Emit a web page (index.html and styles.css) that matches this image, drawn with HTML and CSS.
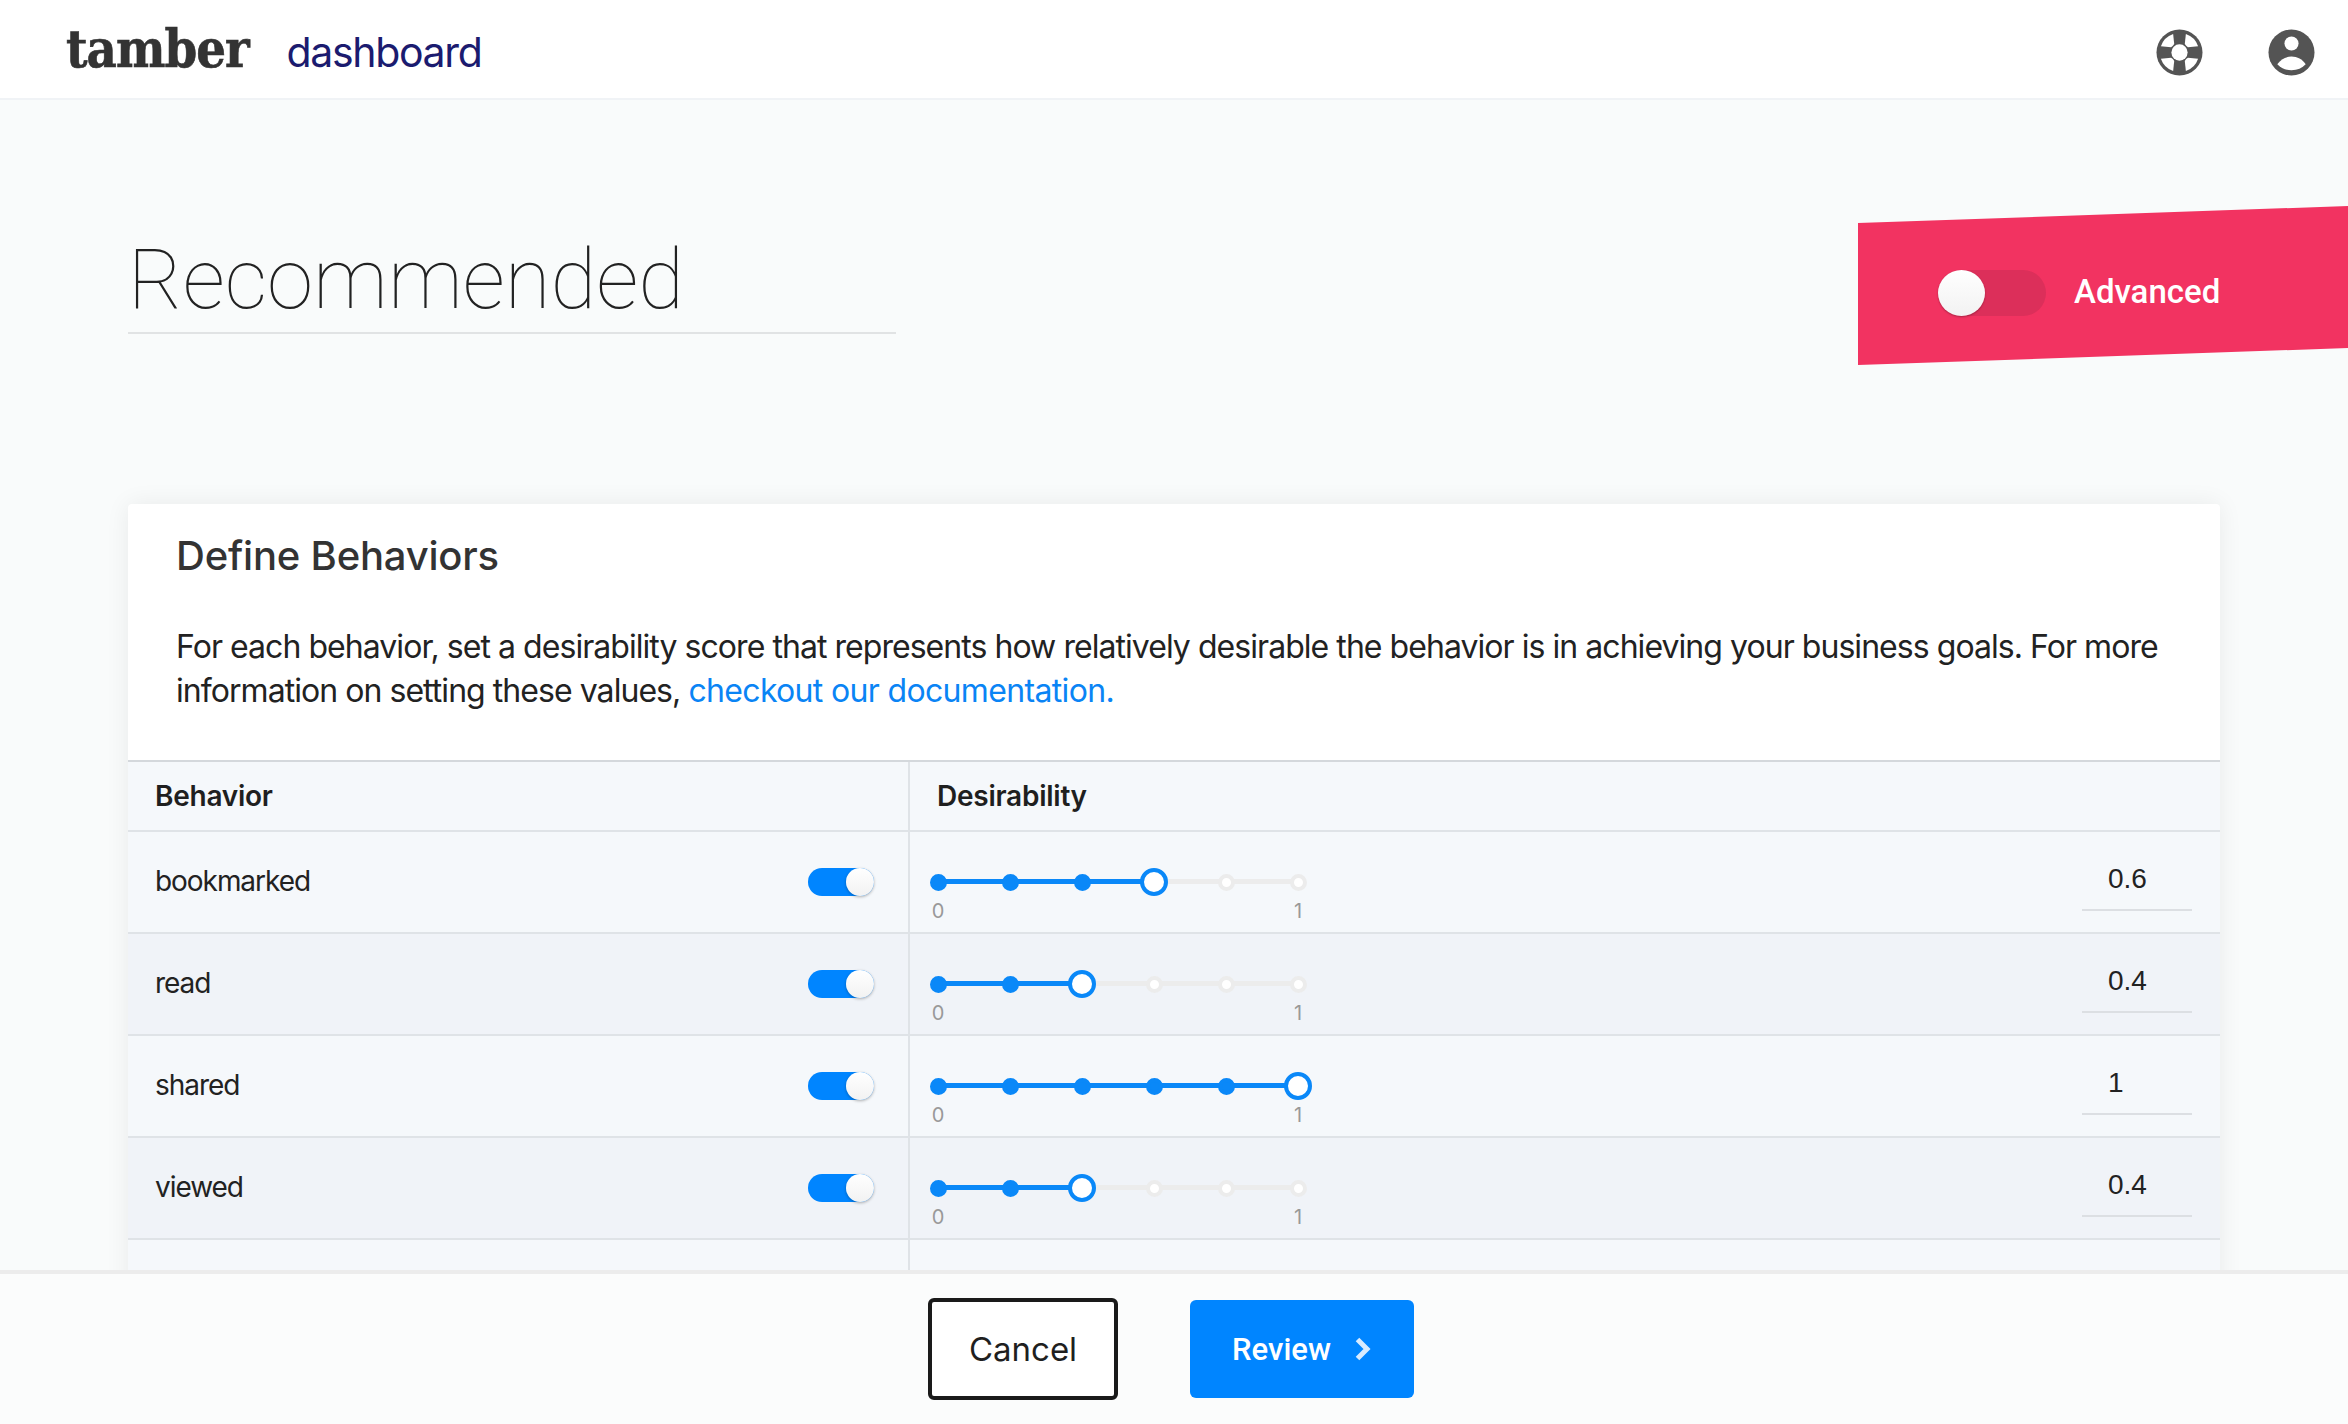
FILE: index.html
```html
<!DOCTYPE html>
<html lang="en">
<head>
<meta charset="utf-8">
<title>tamber dashboard</title>
<link rel="stylesheet" href="styles.css">
</head>
<body>
<header class="topbar">
  <div class="brand">
    <span class="logo">tamber</span>
    <span class="product">dashboard</span>
  </div>
  <div class="top-icons">
    <svg class="top-icon" viewBox="0 0 48 48" aria-label="Help">
      <circle cx="24" cy="24" r="23.5" fill="#545454"/>
      <g fill="#fff">
        <path d="M30.5 5A20 20 0 0 1 43 17.5L32.6 18.6Q30.5 17.5 29.4 15.4Z"/>
        <path d="M43 30.5A20 20 0 0 1 30.5 43L29.4 32.6Q30.5 30.5 32.6 29.4Z"/>
        <path d="M17.5 43A20 20 0 0 1 5 30.5L15.4 29.4Q17.5 30.5 18.6 32.6Z"/>
        <path d="M5 17.5A20 20 0 0 1 17.5 5L18.6 15.4Q17.5 17.5 15.4 18.6Z"/>
        <circle cx="24" cy="24" r="8.3"/>
      </g>
    </svg>
    <svg class="top-icon" viewBox="0 0 48 48" aria-label="Account">
      <circle cx="24" cy="24" r="23.5" fill="#545454"/>
      <circle cx="24" cy="14.8" r="7.2" fill="#fff"/>
      <path d="M9.5 36C13 31 18 28.2 24 28.2S35 31 38.5 36C35 40 30 42 24 42S13 40 9.5 36Z" fill="#fff"/>
    </svg>
  </div>
</header>

<main class="content">
  <div class="ribbon">
    <span class="switch-off"><span class="knob-large"></span></span>
    <span class="ribbon-label">Advanced</span>
  </div>

  <div class="title-block"><h1 class="page-title">Recommended</h1></div>

  <section class="card">
    <div class="card-head">
      <h2 class="card-title">Define Behaviors</h2>
      <p class="card-text">For each behavior, set a desirability score that represents how relatively desirable the behavior is in achieving your business goals. For more information on setting these values, <a class="doc-link" href="#">checkout our documentation.</a></p>
    </div>

    <div class="row row-head">
      <div class="cell-name"><span class="head-text">Behavior</span></div>
      <div class="cell-score"><span class="head-text head-shift">Desirability</span></div>
    </div>

    <div class="row">
      <div class="cell-name"><span class="name">bookmarked</span><span class="switch-on"><span class="knob"></span></span></div>
      <div class="cell-score">
        <div class="slider">
          <div class="track"><div class="fill" style="width:60%"></div></div>
          <div class="stops"><span class="stop"><i class="dot on"></i></span><span class="stop"><i class="dot on"></i></span><span class="stop"><i class="dot on"></i></span><span class="stop"><i class="handle"></i></span><span class="stop"><i class="dot"></i></span><span class="stop"><i class="dot"></i></span></div>
          <div class="marks"><span class="stop mark">0</span><span class="stop mark">1</span></div>
        </div>
        <div class="value">0.6</div>
      </div>
    </div>

    <div class="row row-alt">
      <div class="cell-name"><span class="name">read</span><span class="switch-on"><span class="knob"></span></span></div>
      <div class="cell-score">
        <div class="slider">
          <div class="track"><div class="fill" style="width:40%"></div></div>
          <div class="stops"><span class="stop"><i class="dot on"></i></span><span class="stop"><i class="dot on"></i></span><span class="stop"><i class="handle"></i></span><span class="stop"><i class="dot"></i></span><span class="stop"><i class="dot"></i></span><span class="stop"><i class="dot"></i></span></div>
          <div class="marks"><span class="stop mark">0</span><span class="stop mark">1</span></div>
        </div>
        <div class="value">0.4</div>
      </div>
    </div>

    <div class="row">
      <div class="cell-name"><span class="name">shared</span><span class="switch-on"><span class="knob"></span></span></div>
      <div class="cell-score">
        <div class="slider">
          <div class="track"><div class="fill" style="width:100%"></div></div>
          <div class="stops"><span class="stop"><i class="dot on"></i></span><span class="stop"><i class="dot on"></i></span><span class="stop"><i class="dot on"></i></span><span class="stop"><i class="dot on"></i></span><span class="stop"><i class="dot on"></i></span><span class="stop"><i class="handle"></i></span></div>
          <div class="marks"><span class="stop mark">0</span><span class="stop mark">1</span></div>
        </div>
        <div class="value">1</div>
      </div>
    </div>

    <div class="row row-alt">
      <div class="cell-name"><span class="name">viewed</span><span class="switch-on"><span class="knob"></span></span></div>
      <div class="cell-score">
        <div class="slider">
          <div class="track"><div class="fill" style="width:40%"></div></div>
          <div class="stops"><span class="stop"><i class="dot on"></i></span><span class="stop"><i class="dot on"></i></span><span class="stop"><i class="handle"></i></span><span class="stop"><i class="dot"></i></span><span class="stop"><i class="dot"></i></span><span class="stop"><i class="dot"></i></span></div>
          <div class="marks"><span class="stop mark">0</span><span class="stop mark">1</span></div>
        </div>
        <div class="value">0.4</div>
      </div>
    </div>

    <div class="row">
      <div class="cell-name"></div>
      <div class="cell-score"></div>
    </div>
  </section>
</main>

<footer class="actions">
  <button class="btn-cancel" type="button">Cancel</button>
  <button class="btn-review" type="button">Review
    <svg class="chevron" viewBox="0 0 18 26"><path d="M3.5 3.5 13 13 3.5 22.5" fill="none" stroke="#d8ebff" stroke-width="5"/></svg>
  </button>
</footer>
</body>
</html>
```

FILE: styles.css
```css
* { box-sizing: border-box; }
html, body { margin: 0; height: 100%; }
body {
  height: 1424px;
  display: flex;
  flex-direction: column;
  overflow: hidden;
  background: #f9fbfb;
  font-family: Inter, "Liberation Sans", sans-serif;
  color: #222;
}

.topbar {
  flex: none;
  height: 100px;
  background: #fff;
  border-bottom: 2px solid #f0f3f6;
  display: flex;
  align-items: center;
  justify-content: space-between;
  padding: 0 33px 0 66px;
}
.brand { display: flex; align-items: baseline; gap: 38px; }
.logo {
  font-family: "DejaVu Serif Condensed", "DejaVu Serif", serif;
  font-weight: 700;
  font-size: 52px;
  line-height: 60px;
  color: #333;
  letter-spacing: -1px;
  -webkit-text-stroke: 0.6px #333;
}
.product {
  font-size: 41px;
  letter-spacing: -1.35px;
  color: #1b1b6f;
}
.top-icons { display: flex; gap: 65px; margin-top: 6px; }
.top-icon { width: 47px; height: 47px; display: block; }

.content {
  flex: 1;
  min-height: 0;
  overflow: hidden;
  position: relative;
  padding: 0 128px;
}
.title-block {
  width: 768px;
  height: 234px;
  border-bottom: 2px solid #e1e3e4;
  display: flex;
  align-items: flex-end;
}
.page-title {
  margin: 0 0 4px;
  font-family: Roboto, sans-serif;
  font-weight: 100;
  font-size: 83.5px;
  line-height: 96px;
  color: #222;
}
.ribbon {
  position: absolute;
  left: 1858px;
  top: 106px;
  width: 490px;
  height: 159px;
  background: #f23361;
  clip-path: polygon(0 17px, 100% 0, 100% 142px, 0 100%);
  display: flex;
  align-items: center;
  padding: 12px 0 0 80px;
  gap: 28px;
}
.switch-off {
  width: 108px;
  height: 46px;
  border-radius: 23px;
  background: #dc2f5a;
  display: flex;
  margin-top: 2px;
}
.knob-large {
  width: 47px;
  height: 46px;
  border-radius: 50%;
  background: linear-gradient(#fff, #f2f2f2);
  box-shadow: 0 1px 2px rgba(0,0,0,.3);
}
.ribbon-label {
  color: #fff;
  font-family: Roboto, sans-serif;
  font-weight: 500;
  font-size: 33px;
}

.card {
  margin-top: 170px;
  background: #fff;
  border-radius: 4px 4px 0 0;
  box-shadow: 0 0 24px rgba(0,0,0,.07);
}
.card-head { height: 258px; padding: 26px 40px 0 48px; border-bottom: 2px solid #d4d8dc; }
.card-title {
  margin: 0;
  font-size: 40px;
  line-height: 52px;
  font-weight: 500;
  color: #333;
  letter-spacing: -0.2px;
}
.card-text {
  margin: 43px 0 0;
  font-size: 32px;
  line-height: 44px;
  color: #222;
  letter-spacing: -0.95px;
}
.doc-link { color: #0a84f5; text-decoration: none; letter-spacing: -0.66px; }

.row {
  display: grid;
  grid-template-columns: 782px 1fr;
  height: 102px;
  background: #f5f8fb;
  border-bottom: 2px solid #dfe3e7;
}
.row-head { height: 70px; }
.row-alt { background: #f0f3f8; }
.cell-name {
  border-right: 2px solid #dfe3e7;
  display: flex;
  align-items: center;
  justify-content: space-between;
  padding: 0 34px 0 27px;
}
.cell-score {
  display: flex;
  justify-content: space-between;
  align-items: flex-start;
  padding: 0 28px;
}
.row-head .cell-score { align-items: center; }
.head-text { font-size: 28px; font-weight: 600; color: #1f1f1f; letter-spacing: -0.25px; }
.head-shift { margin-left: -1px; }
.name { font-size: 28px; color: #222; letter-spacing: -1.05px; margin-top: -3px; }

.switch-on {
  width: 66px;
  height: 28px;
  border-radius: 14px;
  background: #0085ff;
  display: flex;
  justify-content: flex-end;
}
.knob {
  width: 28px;
  height: 28px;
  border-radius: 50%;
  background: linear-gradient(#fff, #f2f2f2);
  box-shadow: 0 1px 3px rgba(0,0,0,.3);
}

.slider { width: 360px; position: relative; padding-top: 36px; }
.track {
  position: absolute;
  left: 0;
  right: 0;
  top: 47px;
  height: 5px;
  background: #ececec;
}
.fill { height: 100%; background: #0a88f8; }
.stops, .marks { display: flex; justify-content: space-between; position: relative; }
.stops { height: 28px; align-items: center; }
.stop { width: 0; display: flex; justify-content: center; }
.dot {
  flex: none;
  width: 17px;
  height: 17px;
  border-radius: 50%;
  background: #fff;
  border: 4px solid #ececec;
}
.dot.on { background: #0a88f8; border-color: #0a88f8; }
.handle {
  flex: none;
  width: 28px;
  height: 28px;
  border-radius: 50%;
  background: #fff;
  border: 4px solid #0a88f8;
}
.marks { margin-top: 3px; }
.mark { font-size: 20px; line-height: 24px; color: #999; }

.value {
  width: 110px;
  height: 81px;
  margin-top: -2px;
  padding: 32px 0 0 26px;
  border-bottom: 2px solid #dcdfe3;
  font-family: "Liberation Sans", sans-serif;
  font-size: 28px;
  line-height: 34px;
  color: #222;
}

.actions {
  flex: none;
  height: 154px;
  background: #fbfcfc;
  border-top: 4px solid #ececec;
  position: relative;
  display: flex;
  align-items: center;
  justify-content: center;
  gap: 72px;
  padding-right: 6px;
}
.btn-cancel {
  width: 190px;
  height: 102px;
  background: #fff;
  border: 4px solid #1a1a1a;
  border-radius: 6px;
  font-family: Inter, sans-serif;
  font-size: 33px;
  color: #1f1f1f;
}
.btn-review {
  width: 224px;
  height: 98px;
  background: #0085ff;
  border: 0;
  border-radius: 6px;
  font-family: Roboto, sans-serif;
  font-weight: 500;
  font-size: 31px;
  color: #fff;
  display: flex;
  align-items: center;
  justify-content: center;
  gap: 23px;
}
.chevron { width: 18px; height: 26px; }
```
